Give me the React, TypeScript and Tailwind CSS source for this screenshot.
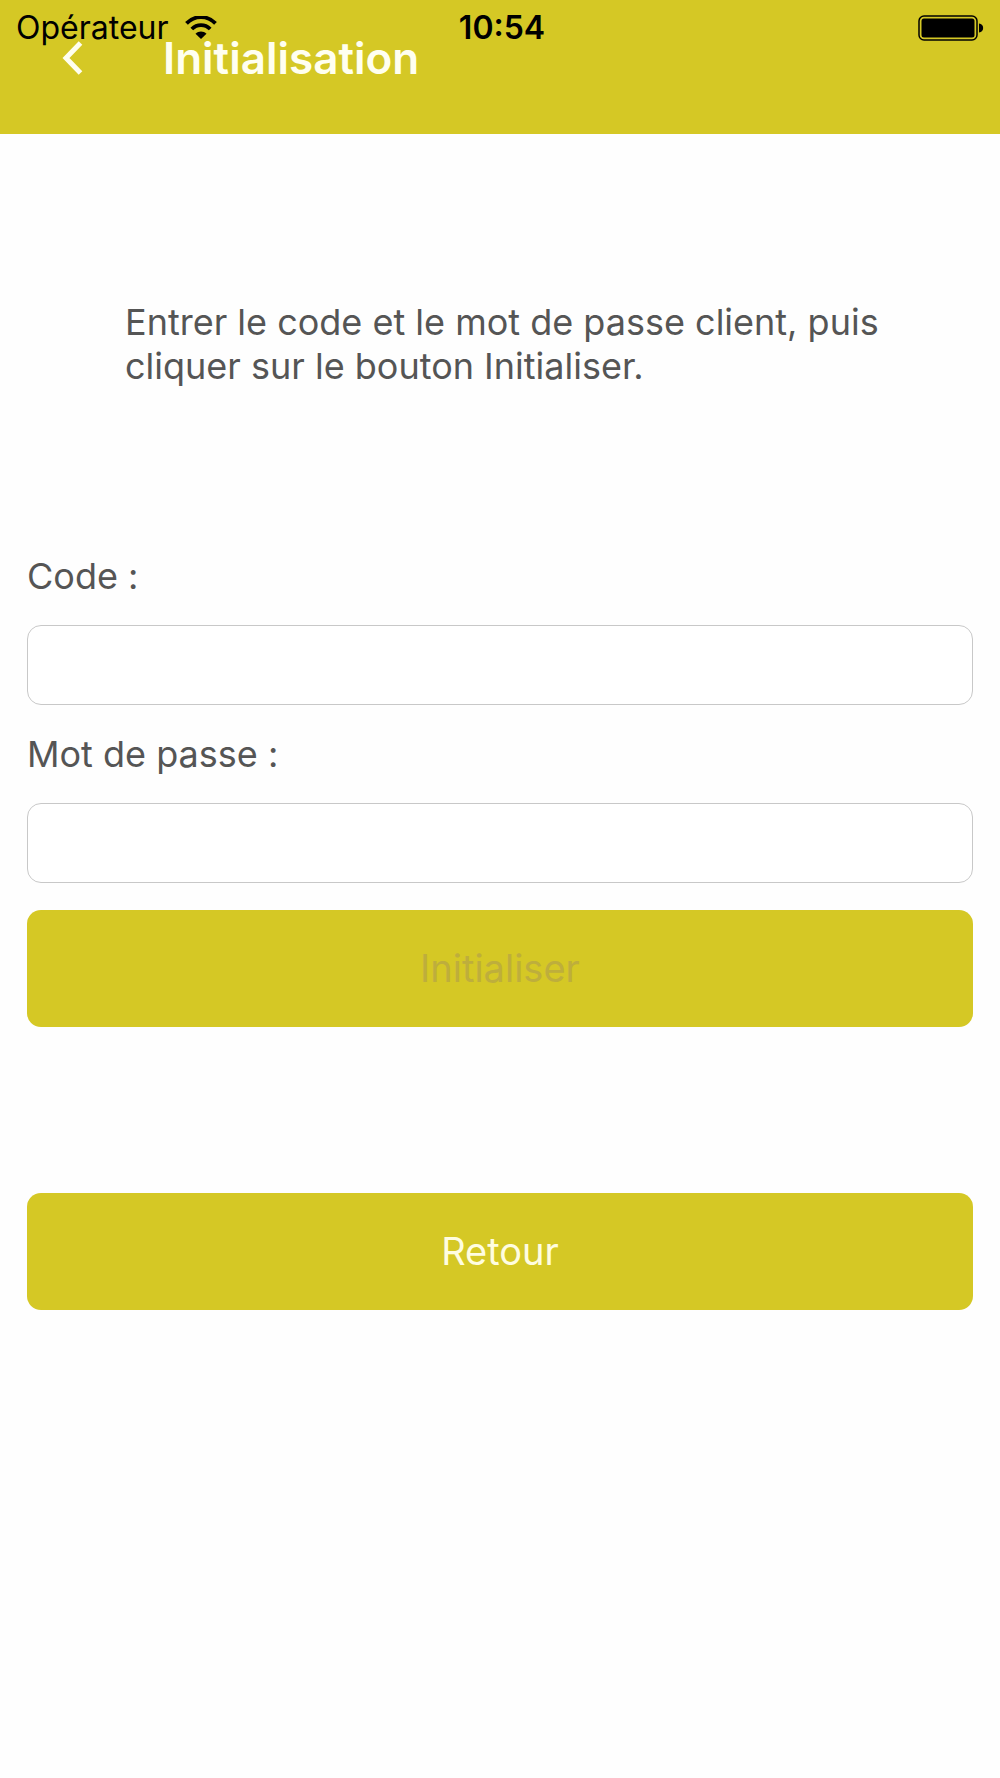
import { useState } from "react";

function StatusBar() {
  return (
    <div className="absolute inset-x-0 top-0 grid grid-cols-3 items-center h-14 pl-4 pr-4 text-black">
      <div className="flex items-center gap-4">
        <span className="text-[32px]">Opérateur</span>
        <svg className="w-8 h-6" viewBox="0 0 32 24" fill="none" aria-hidden="true">
          <path d="M1.5 7.4C9.5 -1 22.5 -1 30.5 7.4" stroke="black" strokeWidth="3.8" />
          <path d="M6.8 13C12 7.8 20 7.8 25.2 13" stroke="black" strokeWidth="3.8" />
          <path d="M10.5 17.7C13.5 14.6 18.5 14.6 21.5 17.7L16 23Z" fill="black" />
        </svg>
      </div>
      <time className="pl-1 text-center text-[32px] font-semibold">10:54</time>
      <svg className="justify-self-end w-[66px] h-[26px]" viewBox="0 0 66 26" fill="none" aria-hidden="true">
        <rect x="1" y="1" width="58" height="24" rx="5" stroke="black" strokeWidth="1.5" />
        <rect x="3.5" y="3.5" width="53" height="19" rx="2.5" fill="black" />
        <path d="M61 8.5C66.5 8.5 66.5 17.5 61 17.5Z" fill="black" />
      </svg>
    </div>
  );
}

export default function App() {
  const [code, setCode] = useState("");
  const [password, setPassword] = useState("");

  const handleSubmit = (e: React.FormEvent) => {
    e.preventDefault();
  };

  const labelStyle = "block text-[36px] leading-[44px]";
  const inputStyle =
    "block w-full h-20 my-[27px] px-5 text-[36px] bg-white border border-[#c8c8c8] rounded-[14px] outline-none";
  const buttonStyle =
    "block w-full h-[117px] rounded-[14px] bg-[#d5c825] text-[38px]";

  return (
    <div className="min-h-screen bg-[#fefefe] text-[#555555] font-['Inter','Liberation_Sans',sans-serif]">
      <header className="relative h-[134px] bg-[#d5c825]">
        <div className="flex items-center h-[116px] pl-[61px] gap-[78px]">
          <button type="button" aria-label="Précédent">
            <svg className="w-6 h-9" viewBox="0 0 24 36" fill="none" aria-hidden="true">
              <path d="M19.5 3L5 18L19.5 33" stroke="#fffff0" strokeWidth="5" />
            </svg>
          </button>
          <h1 className="text-[44px] font-semibold text-[#fffff0]">Initialisation</h1>
        </div>
        <StatusBar />
      </header>

      <main className="px-[27px]">
        <p className="pl-[98px] pr-[70px] py-[166px] text-[36px] leading-[44px]">
          Entrer le code et le mot de passe client, puis cliquer sur le bouton Initialiser.
        </p>

        <form onSubmit={handleSubmit}>
          <label htmlFor="code" className={labelStyle}>Code :</label>
          <input
            id="code"
            type="text"
            value={code}
            onChange={(e) => setCode(e.target.value)}
            className={inputStyle}
          />
          <label htmlFor="password" className={labelStyle}>Mot de passe :</label>
          <input
            id="password"
            type="password"
            value={password}
            onChange={(e) => setPassword(e.target.value)}
            className={inputStyle}
          />
          <button
            type="submit"
            disabled={!code || !password}
            className={`${buttonStyle} text-[#fffde0] disabled:text-[#beae3c]`}
          >
            Initialiser
          </button>
        </form>

        <button type="button" className={`${buttonStyle} mt-[166px] text-[#fffde0]`}>
          Retour
        </button>
      </main>
    </div>
  );
}
